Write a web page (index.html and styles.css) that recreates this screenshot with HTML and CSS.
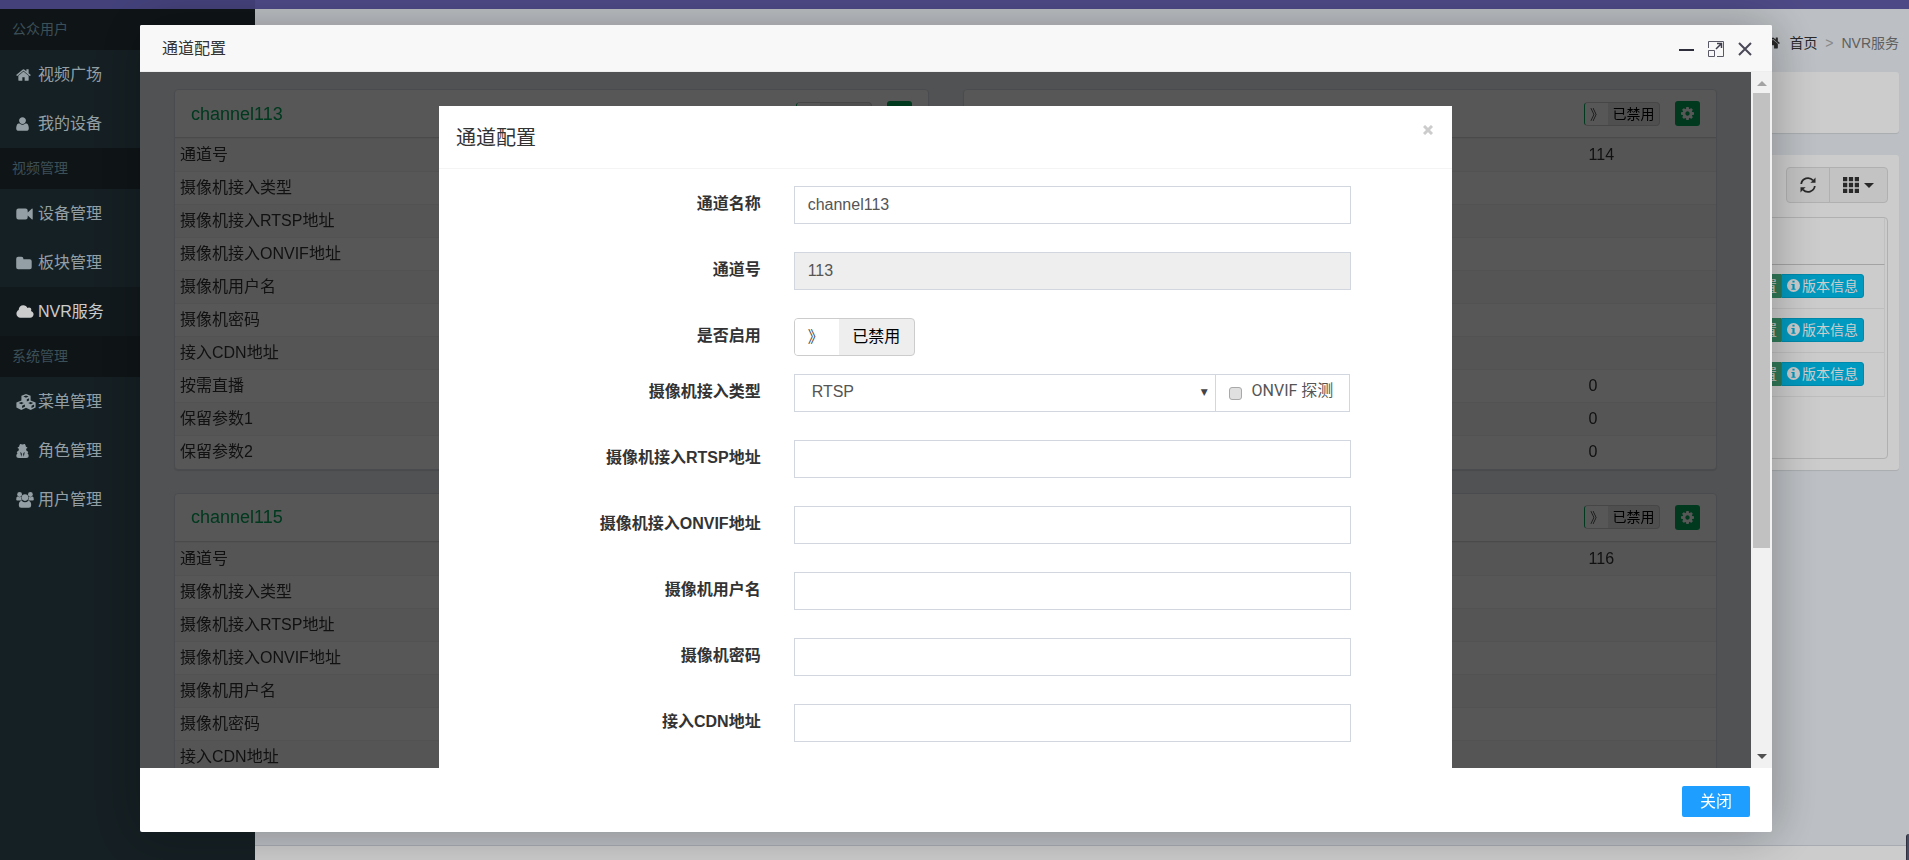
FILE: index.html
```html
<!DOCTYPE html>
<html lang="zh-CN">
<head>
<meta charset="utf-8">
<title>NVR服务</title>
<link rel="stylesheet" href="styles.css">
</head>
<body>
<svg class="sprite" aria-hidden="true">
  <symbol id="i-home" viewBox="0 0 1664 1792"><path d="M1408 992v480q0 26-19 45t-45 19h-384v-384h-256v384h-384q-26 0-45-19t-19-45v-480q0-1 .5-3t.5-3l575-474 575 474q1 2 1 6zm223-69l-62 74q-8 9-21 11h-3q-13 0-21-7l-692-577-692 577q-12 8-24 7-13-2-21-11l-62-74q-8-10-7-23.5t11-21.5l719-599q32-26 76-26t76 26l244 204v-195q0-14 9-23t23-9h192q14 0 23 9t9 23v408l219 182q10 8 11 21.5t-7 23.5z"/></symbol>
  <symbol id="i-user" viewBox="0 0 1408 1792"><path d="M1408 1405q0 120-73 189.500t-194 69.500h-874q-121 0-194-69.500t-73-189.500q0-53 3.500-103.500t14-109 26.500-108.500 43-97.500 62-81 85.500-53.500 111.500-20q9 0 42 21.500t74.500 48 108 48 133.500 21.500 133.500-21.500 108-48 74.500-48 42-21.500q61 0 111.500 20t85.500 53.500 62 81 43 97.500 26.500 108.500 14 109 3.500 103.500zM1088 512q0 159-112.500 271.500T704 896 432.500 783.500 320 512t112.500-271.500T704 128t271.500 112.500T1088 512z"/></symbol>
  <symbol id="i-video" viewBox="0 0 17 16"><path d="M2.500 2.500h7a2.200 2.200 0 0 1 2.200 2.200v1.700l4-3.700q.9-.5 1 .4v9.800q-.1.900-1 .4l-4-3.700v1.700a2.200 2.200 0 0 1-2.200 2.200h-7a2.200 2.200 0 0 1-2.200-2.200V4.700a2.200 2.200 0 0 1 2.200-2.200z"/></symbol>
  <symbol id="i-folder" viewBox="0 0 16 16"><path d="M2.200 1.800h3.200a2 2 0 0 1 2 2v.4h6.200a2 2 0 0 1 2.100 2v6a2 2 0 0 1-2.100 2.100H2.200a2 2 0 0 1-2-2.100V3.800a2 2 0 0 1 2-2z"/></symbol>
  <symbol id="i-cloud" viewBox="0 0 1920 1792"><path d="M1920 1152q0 159-112.500 271.500t-271.500 112.500h-1088q-185 0-316.500-131.500t-131.500-316.500q0-132 71-241.500t187-163.500q-2-28-2-43 0-212 150-362t362-150q158 0 286.500 88t187.500 230q70-62 166-62 106 0 181 75t75 181q0 75-41 138 129 30 213 134.500t84 239.500z"/></symbol>
  <symbol id="i-cubes" viewBox="0 0 20 16"><path fill-rule="evenodd" d="M10 0l4.600 1.800v4.600l5 2v5L14.700 15.900 10 13.800l-4.700 2.100L.4 13.400v-5l5-2V1.800zM10 1.500L7.400 2.600 10 3.700l2.600-1.100zM5.300 8L2.800 9.100l2.500 1.100 2.500-1.100zM14.700 8l-2.500 1.100 2.500 1.100 2.500-1.100zM10.800 5.200v2.300l2.300-1V4.200zM6.100 11.700v2.400l2.800-1.300v-2.300zM15.500 11.700v2.400l2.600-1.300v-2.300z"/></symbol>
  <symbol id="i-secret" viewBox="0 0 14 16"><path fill-rule="evenodd" d="M4.600.5q.7-.2 2.400.6 1.700-.8 2.400-.6.900.6 1.300 2.900 1.600.4 1.600 1 0 .5-1.200.8l-.2 2q1.700.9 2.300 2.200-.5.800-.8 1 1.300 1 1.300 3 0 2.200-2.600 2.200H2.900q-2.600 0-2.600-2.200 0-2 1.300-3-.5-.5-.8-1 .6-1.300 2.300-2.200l-.2-2q-1.200-.3-1.200-.8 0-.6 1.600-1Q3.700 1.100 4.600.5zM4.600 9.200l1 5 .8-3-.7-1.300zM9.400 9.200l-1.100.7-.7 1.300.8 3z"/></symbol>
  <symbol id="i-users" viewBox="0 0 18 16"><circle cx="3.600" cy="2.500" r="2.400"/><circle cx="14.400" cy="2.500" r="2.400"/><path d="M.2 7.600q0-3.400 1.600-3 1.800 1 3.600.2-.5 2 .5 3.600H2Q.2 8.800.2 7.600zM17.800 7.600q0-3.400-1.600-3-1.800 1-3.600.2.500 2-.5 3.600H16q1.800.4 1.800-.8zM9 2.300a3.300 3.300 0 1 1 0 6.600 3.300 3.300 0 0 1 0-6.600zM5.600 8.700q1.600 1.500 3.400 1.500t3.400-1.500q2.800.3 2.800 4.500 0 2.500-2.400 2.500H5.200q-2.400 0-2.400-2.500 0-4.200 2.800-4.500z"/></symbol>
  <symbol id="i-cog" viewBox="128 128 1536 1536"><path d="M1152 896q0-106-75-181t-181-75-181 75-75 181 75 181 181 75 181-75 75-181zm512-109v222q0 12-8 23t-20 13l-185 28q-19 54-39 91 35 50 107 138 10 12 10 25t-9 23q-27 37-99 108t-94 71q-12 0-26-9l-138-108q-44 23-91 38-16 136-29 186-7 28-36 28h-222q-14 0-24.500-8.500t-11.500-21.500l-28-184q-49-16-90-37l-141 107q-10 9-25 9-14 0-25-11-126-114-165-168-7-10-7-23 0-12 8-23 15-21 51-66.500t54-70.500q-27-50-41-99l-183-27q-13-2-21-12.500t-8-23.500v-222q0-12 8-23t19-13l186-28q14-46 39-92-40-57-107-138-10-12-10-24 0-10 9-23 26-36 98.500-107.500t94.500-71.500q13 0 26 10l138 107q44-23 91-38 16-136 29-186 7-28 36-28h222q14 0 24.500 8.500t11.500 21.500l28 184q49 16 90 37l142-107q9-9 24-9 13 0 25 10 129 119 165 170 7 8 7 22 0 12-8 23-15 21-51 66.500t-54 70.500q26 50 41 98l183 28q13 2 21 12.500t8 23.500z"/></symbol>
  <symbol id="i-info" viewBox="0 0 12 12"><path fill-rule="evenodd" d="M6 0a6 6 0 1 1 0 12A6 6 0 0 1 6 0zM5 1.500v1.800h2V1.500zM4 4.500v1h1V9H4v1h4V9H7V4.500z"/></symbol>
  <symbol id="i-refresh" viewBox="0 0 16 16"><path fill="none" stroke="currentColor" stroke-width="1.800" d="M1.200 7A6.800 6.800 0 0 1 13 3.400M14.800 9A6.800 6.800 0 0 1 3 12.600"/><path d="M15.500.6v5.200h-5.200l2-1.800zM.5 15.400v-5.200h5.200l-2 1.800z"/></symbol>
  <symbol id="i-th" viewBox="0 0 15 15"><path d="M0 0h4v4H0zM5.500 0h4v4h-4zM11 0h4v4h-4zM0 5.500h4v4H0zM5.500 5.500h4v4h-4zM11 5.500h4v4h-4zM0 11h4v4H0zM5.500 11h4v4h-4zM11 11h4v4h-4z"/></symbol>
</svg>

<div class="page">
  <header class="topbar"><div class="topbar-logo"></div></header>
  <div class="shell">
    <nav class="sidebar">
      <div class="side-head">公众用户</div>
      <a class="side-link" href="#"><svg class="ic w15"><use href="#i-home"/></svg>视频广场</a>
      <a class="side-link" href="#"><svg class="ic w13"><use href="#i-user"/></svg>我的设备</a>
      <div class="side-head">视频管理</div>
      <a class="side-link" href="#"><svg class="ic w17"><use href="#i-video"/></svg>设备管理</a>
      <a class="side-link" href="#"><svg class="ic w16"><use href="#i-folder"/></svg>板块管理</a>
      <a class="side-link active" href="#"><svg class="ic w18"><use href="#i-cloud"/></svg>NVR服务</a>
      <div class="side-head">系统管理</div>
      <a class="side-link" href="#"><svg class="ic w20"><use href="#i-cubes"/></svg>菜单管理</a>
      <a class="side-link" href="#"><svg class="ic w13"><use href="#i-secret"/></svg>角色管理</a>
      <a class="side-link" href="#"><svg class="ic w18"><use href="#i-users"/></svg>用户管理</a>
    </nav>
    <div class="main">
      <main class="content">
        <div class="crumbs"><a href="#"><svg class="ic"><use href="#i-home"/></svg>首页</a><span class="sep">&gt;</span><span class="here">NVR服务</span></div>
        <section class="panel search"></section>
        <section class="panel list">
          <div class="tools">
            <button class="tool" type="button" aria-label="刷新"><svg class="ic w16"><use href="#i-refresh"/></svg></button>
            <button class="tool" type="button" aria-label="列"><svg class="ic w16"><use href="#i-th"/></svg><span class="caret"></span></button>
          </div>
          <div class="grid-box">
            <div class="grid-head"></div>
            <div class="grid-row"><button class="b-green" type="button">配置</button><button class="b-blue" type="button"><svg class="ic"><use href="#i-info"/></svg>版本信息</button></div>
            <div class="grid-row"><button class="b-green" type="button">配置</button><button class="b-blue" type="button"><svg class="ic"><use href="#i-info"/></svg>版本信息</button></div>
            <div class="grid-row"><button class="b-green" type="button">配置</button><button class="b-blue" type="button"><svg class="ic"><use href="#i-info"/></svg>版本信息</button></div>
          </div>
        </section>
      </main>
      <footer class="foot"></footer>
    </div>
  </div>
</div>

<div class="shade"></div>
<div class="corner"></div>

<section class="layer" role="dialog" aria-label="通道配置">
  <header class="layer-title">
    <span>通道配置</span>
    <div class="layer-ctl">
      <button type="button" aria-label="最小化"><svg width="16" height="16"><path d="M0 9h15" stroke="#2e2d3c" stroke-width="2"/></svg></button>
      <button type="button" aria-label="最大化"><svg width="16" height="16" fill="none" stroke="#5a5966"><path d="M.5 7V.5h15v15H9" /><path d="M.5 9.500h6v6h-6z"/><path d="M8 8l5-5M9 2.500h4.500V7" stroke-width="1.500" stroke="#3e3d4c"/></svg></button>
      <button type="button" aria-label="关闭"><svg width="16" height="16"><path d="M2 2l12 12M14 2L2 14" stroke="#4a4957" stroke-width="2"/></svg></button>
    </div>
  </header>
  <div class="layer-body">
    <div class="frame">
      <div class="cards">
        <article class="card">
          <header class="card-head"><h3>channel113</h3><button class="switch small" type="button"><span>》</span><span>已禁用</span></button><button class="gear" type="button" aria-label="设置"><svg class="ic"><use href="#i-cog"/></svg></button></header>
          <table>
            <tr><th>通道号</th><td>113</td></tr>
            <tr><th>摄像机接入类型</th><td></td></tr>
            <tr><th>摄像机接入RTSP地址</th><td></td></tr>
            <tr><th>摄像机接入ONVIF地址</th><td></td></tr>
            <tr><th>摄像机用户名</th><td></td></tr>
            <tr><th>摄像机密码</th><td></td></tr>
            <tr><th>接入CDN地址</th><td></td></tr>
            <tr><th>按需直播</th><td>0</td></tr>
            <tr><th>保留参数1</th><td>0</td></tr>
            <tr><th>保留参数2</th><td>0</td></tr>
          </table>
        </article>
        <article class="card">
          <header class="card-head"><h3>channel114</h3><button class="switch small" type="button"><span>》</span><span>已禁用</span></button><button class="gear" type="button" aria-label="设置"><svg class="ic"><use href="#i-cog"/></svg></button></header>
          <table>
            <tr><th>通道号</th><td>114</td></tr>
            <tr><th>摄像机接入类型</th><td></td></tr>
            <tr><th>摄像机接入RTSP地址</th><td></td></tr>
            <tr><th>摄像机接入ONVIF地址</th><td></td></tr>
            <tr><th>摄像机用户名</th><td></td></tr>
            <tr><th>摄像机密码</th><td></td></tr>
            <tr><th>接入CDN地址</th><td></td></tr>
            <tr><th>按需直播</th><td>0</td></tr>
            <tr><th>保留参数1</th><td>0</td></tr>
            <tr><th>保留参数2</th><td>0</td></tr>
          </table>
        </article>
        <article class="card">
          <header class="card-head"><h3>channel115</h3><button class="switch small" type="button"><span>》</span><span>已禁用</span></button><button class="gear" type="button" aria-label="设置"><svg class="ic"><use href="#i-cog"/></svg></button></header>
          <table>
            <tr><th>通道号</th><td>115</td></tr>
            <tr><th>摄像机接入类型</th><td></td></tr>
            <tr><th>摄像机接入RTSP地址</th><td></td></tr>
            <tr><th>摄像机接入ONVIF地址</th><td></td></tr>
            <tr><th>摄像机用户名</th><td></td></tr>
            <tr><th>摄像机密码</th><td></td></tr>
            <tr><th>接入CDN地址</th><td></td></tr>
          </table>
        </article>
        <article class="card">
          <header class="card-head"><h3>channel116</h3><button class="switch small" type="button"><span>》</span><span>已禁用</span></button><button class="gear" type="button" aria-label="设置"><svg class="ic"><use href="#i-cog"/></svg></button></header>
          <table>
            <tr><th>通道号</th><td>116</td></tr>
            <tr><th>摄像机接入类型</th><td></td></tr>
            <tr><th>摄像机接入RTSP地址</th><td></td></tr>
            <tr><th>摄像机接入ONVIF地址</th><td></td></tr>
            <tr><th>摄像机用户名</th><td></td></tr>
            <tr><th>摄像机密码</th><td></td></tr>
            <tr><th>接入CDN地址</th><td></td></tr>
          </table>
        </article>
      </div>
      <div class="backdrop">
        <form class="modal">
          <header class="modal-head"><h2>通道配置</h2><button type="button" aria-label="关闭"><svg width="10" height="10"><path d="M1 1l8 8M9 1L1 9" stroke="#ccc" stroke-width="3"/></svg></button></header>
          <div class="modal-body">
            <div class="field"><label for="name">通道名称</label><input id="name" type="text" value="channel113"></div>
            <div class="field"><label for="num">通道号</label><input id="num" type="text" value="113" readonly></div>
            <div class="field tight"><label for="enable">是否启用</label><div><button class="switch" id="enable" type="button"><span>》</span><span>已禁用</span></button></div></div>
            <div class="field"><label for="kind">摄像机接入类型</label><div class="group"><div class="pick"><select id="kind"><option>RTSP</option></select></div><label class="addon" for="probe"><input id="probe" type="checkbox"><span>ONVIF 探测</span></label></div></div>
            <div class="field"><label for="rtsp">摄像机接入RTSP地址</label><input id="rtsp" type="text"></div>
            <div class="field"><label for="onvif">摄像机接入ONVIF地址</label><input id="onvif" type="text"></div>
            <div class="field"><label for="user">摄像机用户名</label><input id="user" type="text"></div>
            <div class="field"><label for="pass">摄像机密码</label><input id="pass" type="password"></div>
            <div class="field"><label for="cdn">接入CDN地址</label><input id="cdn" type="text"></div>
          </div>
        </form>
      </div>
    </div>
    <div class="scroll"><span class="up"></span><span class="thumb"></span><span class="down"></span></div>
  </div>
  <footer class="layer-foot"><button type="button">关闭</button></footer>
</section>
</body>
</html>
```

FILE: styles.css
```css
* { box-sizing: border-box; }
body {
  margin: 0;
  height: 100vh;
  overflow: hidden;
  font: 16px/24px "Liberation Sans", "Noto Sans CJK SC", sans-serif;
  color: #333;
}
button, input, select { font: inherit; color: inherit; margin: 0; }
button { padding: 0; border: 0; background: none; }
a { color: inherit; text-decoration: none; }
h2, h3 { margin: 0; font-weight: 400; }
.sprite { position: absolute; width: 0; height: 0; }
.ic { width: 14px; height: 16px; fill: currentColor; flex: none; }
.w13 { width: 13px; }
.w15 { width: 15px; }
.w16 { width: 16px; }
.w17 { width: 17px; }
.w18 { width: 18px; }
.w20 { width: 20px; }

/* page behind the dialog */
.page { height: 100vh; display: flex; flex-direction: column; }
.topbar { height: 9px; background: #605ca8; }
.topbar-logo { width: 255px; height: 100%; background: #555299; }
.shell { flex: 1; display: flex; min-height: 0; }
.sidebar { width: 255px; background: #1b282d; color: #b8c7ce; }
.side-head { padding: 8px 12px 9px; background: #131a1d; color: #4b646f; font-size: 14px; line-height: 24px; }
.side-link { display: flex; align-items: center; height: 49px; padding: 0 16px; }
.side-link .ic { margin-right: 7px; }
.side-link .w13 { margin-right: 9px; }
.side-link .w17 { margin-right: 5px; }
.side-link .w16 { margin-right: 6px; }
.side-link .w18 { margin-right: 4px; }
.side-link .w20 { margin-right: 2px; }
.side-link.active { background: #172024; color: #fff; }
.main { flex: 1; display: flex; flex-direction: column; min-width: 0; }
.content { flex: 1; background: #ecf0f5; padding: 23px 10px 0 17px; }
.foot { height: 15px; background: #fff; border-top: 1px solid #d2d6de; }
.crumbs { display: flex; justify-content: flex-end; font-size: 14px; line-height: 22px; height: 40px; }
.crumbs a { display: flex; align-items: center; height: 22px; }
.crumbs a .ic { margin-right: 9px; }
.crumbs .sep { width: 24px; text-align: center; color: #aaa; }
.crumbs .here { color: #777; }
.panel { background: #fff; border-radius: 3px; box-shadow: 0 1px 1px rgba(0,0,0,.1); }
.search { height: 61px; margin-bottom: 22px; }
.list { padding: 12px 11px 11px; }
.tools { display: flex; justify-content: flex-end; }
.tool { display: flex; align-items: center; justify-content: center; gap: 5px; width: 44px; height: 36px; background: #f4f4f4; border: 1px solid #ddd; border-radius: 4px 0 0 4px; }
.tool + .tool { width: 59px; margin-left: -1px; border-radius: 0 4px 4px 0; }
.caret { border: 5px solid transparent; border-top-color: #333; border-bottom: 0; }
.grid-box { margin-top: 14px; height: 242px; border: 1px solid #ddd; border-radius: 4px; padding-right: 2px; }
.grid-head { height: 47px; border-bottom: 1px solid #ccc; border-right: 1px solid #f0f0f0; }
.grid-row { display: flex; justify-content: flex-end; align-items: center; height: 44px; padding: 0 20px 2px 0; border-bottom: 1px solid #eee; border-right: 1px solid #f0f0f0; font-size: 14px; color: #fff; }
.b-green, .b-blue { height: 24px; line-height: 22px; display: flex; align-items: center; }
.b-green { padding: 0 4px 0 8px; background: #3d9970; }
.b-blue { padding: 0 5px; gap: 2px; background: #00c0ef; border: 1px solid #00acd6; border-radius: 0 3px 3px 0; }
.b-blue .ic { width: 13px; height: 13px; }
.shade { position: fixed; inset: 0; background: rgba(0,0,0,.2); }
.corner { position: fixed; right: 0; bottom: 0; width: 3px; height: 26px; background: #484c5f; border-left: 1px solid #2e3040; border-radius: 3px 0 0 0; }

/* dialog window */
.layer { position: fixed; inset: 25px 137px 28px 140px; display: flex; flex-direction: column; background: #fff; border-radius: 2px; box-shadow: 1px 1px 50px rgba(0,0,0,.3); }
.layer-title { display: flex; justify-content: space-between; align-items: center; height: 47px; padding: 2px 19px 0 22px; background: #f8f8f8; border-bottom: 1px solid #eee; border-radius: 2px 2px 0 0; }
.layer-ctl { display: flex; gap: 13px; }
.layer-ctl button { display: flex; }
.layer-body { flex: 1; display: flex; min-height: 0; }
.frame { flex: 1; position: relative; overflow: hidden; background: #ecf0f5; }
.layer-foot { display: flex; justify-content: flex-end; padding: 18px 22px 15px; }
.layer-foot button { width: 68px; height: 31px; background: #1e9fff; color: #fff; border-radius: 2px; }
.scroll { width: 21px; background: #f1f1f1; display: flex; flex-direction: column; align-items: center; }
.up, .down { width: 0; height: 0; border: 5px solid transparent; }
.up { border-top: 0; border-bottom-color: #a3a3a3; margin: 9px 0 7px; }
.thumb { width: 17px; height: 455px; background: #c1c1c1; }
.down { border-bottom: 0; border-top-color: #505050; margin: auto 0 9px; }

/* channel cards */
.cards { display: grid; grid-template-columns: 1fr 1fr; gap: 23px 34px; padding: 17px 34px; }
.card { background: #fff; border: 1px solid #d8dce3; border-radius: 4px; box-shadow: 0 1px 1px rgba(0,0,0,.1); }
.card-head { display: flex; align-items: center; height: 48px; padding: 0 16px; border-bottom: 1px solid #d9d9d9; }
.card-head h3 { flex: 1; font-size: 18px; color: #00a65a; }
.gear { display: flex; align-items: center; justify-content: center; width: 25px; height: 25px; margin-left: 15px; background: #00a65a; color: #fff; border-radius: 3px; }
.gear .ic { width: 13px; height: 13px; }
.card table { width: 100%; border-collapse: collapse; table-layout: fixed; }
.card tr { height: 33px; }
.card tr:nth-child(odd) { background: #f9f9f9; }
.card th, .card td { padding: 0 5px; text-align: left; font-weight: 400; line-height: 32px; border-top: 1px solid #f0f0f0; }
.card th { width: 82%; }
.card td { padding-left: 8px; }
.switch { display: inline-flex; height: 38px; border: 1px solid #ccc; border-radius: 4px; overflow: hidden; color: #000; line-height: 36px; background: #eee; vertical-align: top; }
.switch span:first-child { width: 44px; padding-left: 13px; background: #fff; text-align: left; color: #444; }
.switch span:last-child { width: 75px; text-align: center; }
.switch.small { height: 24px; line-height: 22px; font-size: 14px; border-left-color: #00a65a; background: #e6e6e6; }
.switch.small span:first-child { width: 23px; padding-left: 5px; }
.switch.small span:last-child { width: 51px; }

/* form over the cards */
.backdrop { position: absolute; inset: 0; padding-top: 34px; background: rgba(0,0,0,.66); }
.modal { width: 1013px; max-width: 90%; min-height: 100%; margin: 0 auto; background: #fff; }
.modal-head { display: flex; justify-content: space-between; align-items: flex-start; padding: 17px 19px 15px 17px; border-bottom: 1px solid #f4f4f4; }
.modal-head h2 { font-size: 20px; line-height: 30px; }
.modal-head button { display: flex; padding-top: 2px; }
.modal-body { padding-top: 17px; display: flex; flex-direction: column; gap: 28px; }
.field { display: grid; grid-template-columns: 4fr 7fr 1fr; min-height: 38px; }
.field > label { padding: 6px 16px 0 0; text-align: right; font-weight: 700; }
.field > :nth-child(2) { margin: 0 17px; }
.field.tight { margin-bottom: -10px; }
.field input[type=text], .field input[type=password] { height: 38px; min-width: 0; padding: 0 13px; border: 1px solid #d2d6de; border-radius: 0; background: #fff; color: #555; outline: 0; }
.field input[readonly] { background: #eee; }
.group { display: flex; color: #555; padding-right: 1px; }
.pick { position: relative; flex: 1; }
.pick::after { content: "▼"; position: absolute; right: 8px; top: 6px; font: 9px/24px "DejaVu Sans", sans-serif; color: #444; }
.pick select { width: 100%; height: 38px; padding: 0 17px 2px; border: 1px solid #d2d6de; border-radius: 0; background: #fff; appearance: none; }
.addon { display: flex; gap: 10px; align-items: center; width: 135px; height: 38px; margin-left: -1px; padding: 0 13px; border: 1px solid #d2d6de; white-space: nowrap; }
.addon span { font-family: Roboto, "Noto Sans CJK SC", sans-serif; line-height: 32px; height: 36px; }
.addon input { appearance: none; width: 13px; height: 13px; border: 1px solid #a9a9a9; border-radius: 3px; background: #e0e0e0; }
```
